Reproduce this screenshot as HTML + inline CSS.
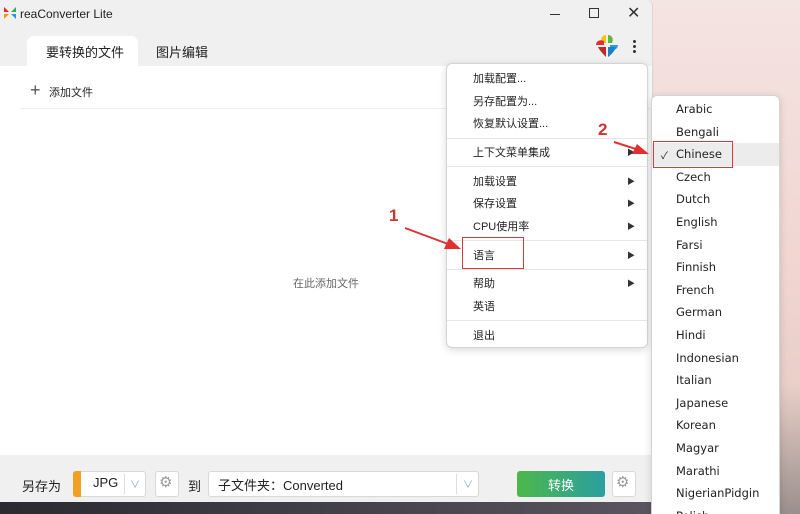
<!DOCTYPE html>
<html><head><meta charset="utf-8"><style>
*{margin:0;padding:0;box-sizing:border-box}
html,body{width:800px;height:514px;overflow:hidden}
body{position:relative;font-family:"Liberation Sans","Noto Sans CJK SC",sans-serif;background:linear-gradient(180deg,#f4e4e2 0%,#f1d6d2 50%,#e9cfc8 75%,#9a8f8c 100%)}
.abs{position:absolute}
.win{left:0;top:0;width:653px;height:502px;background:#f0f0f0;border-right:1px solid #d8d8d8;border-radius:0 6px 0 0}
.t{font-size:12px;color:#222;white-space:nowrap}
.menu{background:#fff;border:1px solid #d4d4d4;border-radius:6px;box-shadow:0 2px 8px rgba(0,0,0,.15)}
.sep{height:1px;background:#e6e6e6}
.arr{font-size:8px;color:#333}
.red{border:1.5px solid #d83a3a}
</style></head><body>
<div class="abs win">
  <svg class="abs" style="left:3px;top:6px" width="14" height="14" viewBox="0 0 14 14"><path d="M1 1l5 5-5 0z" fill="#e23"/><path d="M13 1l-5 5 5 0z" fill="#3a5"/><path d="M1 13l5-5-5 0z" fill="#e90"/><path d="M13 13l-5-5 5 0z" fill="#29d"/></svg>
  <div class="abs t" style="left:20px;top:7px;font-size:12px">reaConverter Lite</div>
  <div class="abs" style="left:550px;top:14px;width:10px;height:1px;background:#333"></div>
  <div class="abs" style="left:589px;top:8px;width:10px;height:10px;border:1px solid #333"></div>
  <div class="abs t" style="left:627px;top:3px;font-size:16px;color:#333">✕</div>
  <div class="abs" style="left:27px;top:36px;width:111px;height:31px;background:#fff;border-radius:7px 7px 0 0"></div>
  <div class="abs t" style="left:46px;top:42px;font-size:13px">要转换的文件</div>
  <div class="abs t" style="left:156px;top:42px;font-size:13px">图片编辑</div>
  <svg class="abs" style="left:594px;top:33px" width="26" height="26" viewBox="0 0 26 26"><path d="M12 2c-4 0-6 4-4 8l4 0z" fill="#f5c400"/><path d="M14 2c4 0 6 4 4 8l-4 0z" fill="#5cb83a"/><path d="M2 12c0-4 4-6 8-4v4z" fill="#e03030"/><path d="M24 12c0 4-4 6-8 4v-4z" fill="#2aa0e0"/><path d="M4 14c2 4 6 8 8 10v-10z" fill="#c0282c"/><path d="M14 14v10c3-2 6-5 8-10z" fill="#1e7fc8"/></svg>
  <div class="abs" style="left:633px;top:40px;width:3px;height:3px;background:#333;border-radius:2px;box-shadow:0 5px 0 #333,0 10px 0 #333"></div>
  <div class="abs" style="left:0;top:66px;width:652px;height:389px;background:#fff"></div>
  <div class="abs t" style="left:30px;top:80px;font-size:18px;color:#555">+</div>
  <div class="abs t" style="left:49px;top:84px;font-size:11px">添加文件</div>
  <div class="abs" style="left:20px;top:108px;width:630px;height:1px;background:#eee"></div>
  <div class="abs t" style="left:293px;top:275px;font-size:11px;color:#666">在此添加文件</div>
  <div class="abs t" style="left:22px;top:476px;font-size:13px">另存为</div>
  <div class="abs" style="left:73px;top:471px;width:73px;height:26px;background:#fff;border:1px solid #d8d8d8;border-radius:3px"></div>
  <div class="abs" style="left:73px;top:471px;width:8px;height:26px;background:#f0a020;border-radius:3px 0 0 3px"></div>
  <div class="abs t" style="left:93px;top:475px;font-size:13px">JPG</div>
  <div class="abs" style="left:124px;top:474px;width:1px;height:20px;background:#ddd"></div>
  <div class="abs t" style="left:130px;top:476px;font-size:10px;color:#8ab">∨</div>
  <div class="abs" style="left:155px;top:471px;width:24px;height:26px;background:#fff;border:1px solid #d8d8d8;border-radius:3px"></div>
  <div class="abs t" style="left:159px;top:473px;font-size:15px;color:#999">⚙</div>
  <div class="abs t" style="left:188px;top:476px;font-size:13px">到</div>
  <div class="abs" style="left:208px;top:471px;width:271px;height:26px;background:#fff;border:1px solid #d8d8d8;border-radius:3px"></div>
  <div class="abs t" style="left:218px;top:475px;font-size:13px">子文件夹：Converted</div>
  <div class="abs" style="left:456px;top:474px;width:1px;height:20px;background:#ddd"></div>
  <div class="abs t" style="left:463px;top:476px;font-size:10px;color:#8ab">∨</div>
  <div class="abs" style="left:517px;top:471px;width:88px;height:26px;background:linear-gradient(90deg,#4cb84a,#2a9fa0);border-radius:3px"></div>
  <div class="abs t" style="left:548px;top:475px;font-size:13px;color:#fff">转换</div>
  <div class="abs" style="left:612px;top:471px;width:24px;height:26px;background:#fff;border:1px solid #d8d8d8;border-radius:3px"></div>
  <div class="abs t" style="left:616px;top:473px;font-size:15px;color:#999">⚙</div>
</div>
<div class="abs" style="left:0;top:502px;width:653px;height:12px;background:linear-gradient(90deg,#2a2a30,#5a5560)"></div>

<div class="abs menu" style="left:446px;top:63px;width:202px;height:285px">
  <div class="abs t" style="left:26px;top:6px;font-size:11px">加载配置...</div>
  <div class="abs t" style="left:26px;top:29px;font-size:11px">另存配置为...</div>
  <div class="abs t" style="left:26px;top:51px;font-size:11px">恢复默认设置...</div>
  <div class="abs sep" style="left:0;top:74px;width:200px"></div>
  <div class="abs t" style="left:26px;top:80px;font-size:11px">上下文菜单集成</div><div class="abs arr" style="left:180px;top:83px">▶</div>
  <div class="abs sep" style="left:0;top:102px;width:200px"></div>
  <div class="abs t" style="left:26px;top:109px;font-size:11px">加载设置</div><div class="abs arr" style="left:180px;top:112px">▶</div>
  <div class="abs t" style="left:26px;top:131px;font-size:11px">保存设置</div><div class="abs arr" style="left:180px;top:134px">▶</div>
  <div class="abs t" style="left:26px;top:154px;font-size:11px">CPU使用率</div><div class="abs arr" style="left:180px;top:157px">▶</div>
  <div class="abs sep" style="left:0;top:176px;width:200px"></div>
  <div class="abs t" style="left:26px;top:183px;font-size:11px">语言</div><div class="abs arr" style="left:180px;top:186px">▶</div>
  <div class="abs sep" style="left:0;top:205px;width:200px"></div>
  <div class="abs t" style="left:26px;top:211px;font-size:11px">帮助</div><div class="abs arr" style="left:180px;top:214px">▶</div>
  <div class="abs t" style="left:26px;top:234px;font-size:11px">英语</div>
  <div class="abs sep" style="left:0;top:256px;width:200px"></div>
  <div class="abs t" style="left:26px;top:263px;font-size:11px">退出</div>
</div>
<div class="abs red" style="left:462px;top:237px;width:62px;height:32px"></div>

<div class="abs menu" style="left:651px;top:95px;width:129px;height:430px">
  <div class="abs" style="left:0;top:47px;width:127px;height:23px;background:#ececec"></div>
  <div class="abs t" style="left:9px;top:51px;font-size:10px">✓</div>
</div>
<div class="abs" style="left:676px;top:98px;color:#222;line-height:22.6px;font-family:'DejaVu Sans','Liberation Sans',sans-serif;font-size:11.5px">
Arabic<br>Bengali<br>Chinese<br>Czech<br>Dutch<br>English<br>Farsi<br>Finnish<br>French<br>German<br>Hindi<br>Indonesian<br>Italian<br>Japanese<br>Korean<br>Magyar<br>Marathi<br>NigerianPidgin<br>Polish</div>
<div class="abs red" style="left:653px;top:141px;width:80px;height:27px"></div>

<div class="abs" style="left:389px;top:206px;font-size:17px;font-weight:bold;color:#d83030">1</div>
<div class="abs" style="left:598px;top:120px;font-size:17px;font-weight:bold;color:#d83030">2</div>
<svg class="abs" style="left:0;top:0" width="800" height="514"><path d="M405 228L448 244" stroke="#e03030" stroke-width="2"/><path d="M461 249L444 249L449 238z" fill="#e03030"/><path d="M614 142L636 149" stroke="#e03030" stroke-width="2"/><path d="M649 154L632 154L637 144z" fill="#e03030"/></svg>
</body></html>
